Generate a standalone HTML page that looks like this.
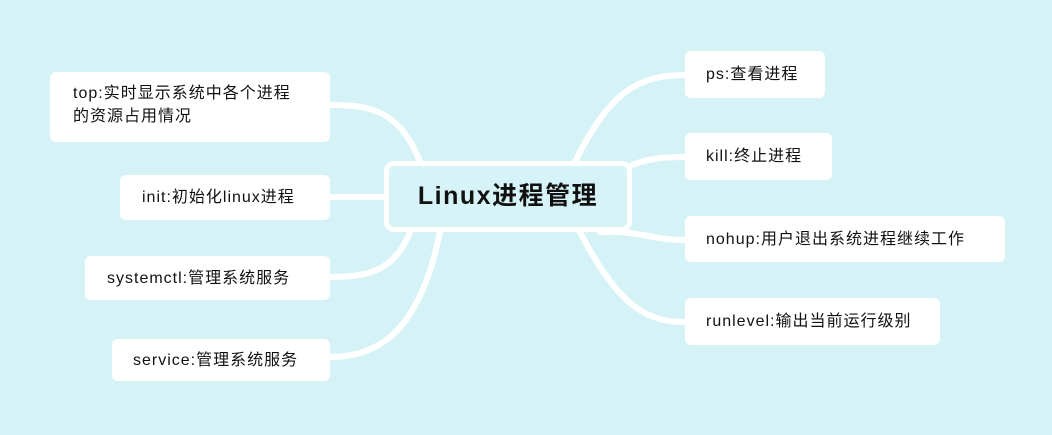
<!DOCTYPE html>
<html><head><meta charset="utf-8"><style>
body{margin:0;width:1052px;height:435px;background:#d5f3f7;position:relative;overflow:hidden;font-family:"Liberation Sans","Noto Sans CJK SC",sans-serif;}
.n{position:absolute;background:#fff;border-radius:6px;font-size:16px;letter-spacing:1px;color:#111;line-height:23px;box-sizing:border-box;white-space:nowrap;}
.c{position:absolute;left:384px;top:161px;width:248px;height:71px;border:5px solid #fff;border-radius:10px;box-sizing:border-box;font-size:25px;letter-spacing:1.5px;font-weight:bold;text-align:center;line-height:61px;color:#111;background:#d6f3f7;}
svg{position:absolute;left:0;top:0}
</style></head><body>
<svg width="1052" height="435"><g fill="none" stroke="#fff" stroke-width="6" stroke-linecap="round">
<path d="M420 162 C400 110 370 105 330 105"/>
<path d="M384 197 C360 197 350 197 330 197"/>
<path d="M410 232 C395 270 370 277 330 277"/>
<path d="M440 232 C420 330 380 357 330 357"/>
<path d="M575 162 C610 90 640 75 685 75"/>
<path d="M632 165 C650 158 665 157 685 157"/>
<path d="M600 232 C640 230 650 240 685 240"/>
<path d="M580 232 C620 310 650 322 685 322"/>
</g></svg>
<div class="c">Linux进程管理</div>
<div class="n" style="left:50px;top:72px;width:280px;height:70px;padding:10px 0 0 23px">top:实时显示系统中各个进程<br>的资源占用情况</div>
<div class="n" style="left:120px;top:175px;width:210px;height:45px;padding:11px 0 0 22px">init:初始化linux进程</div>
<div class="n" style="left:85px;top:256px;width:245px;height:44px;padding:11px 0 0 22px">systemctl:管理系统服务</div>
<div class="n" style="left:112px;top:339px;width:218px;height:42px;padding:10px 0 0 21px">service:管理系统服务</div>
<div class="n" style="left:685px;top:51px;width:140px;height:47px;padding:12px 0 0 21px">ps:查看进程</div>
<div class="n" style="left:685px;top:133px;width:147px;height:47px;padding:12px 0 0 21px">kill:终止进程</div>
<div class="n" style="left:685px;top:216px;width:320px;height:46px;padding:12px 0 0 21px">nohup:用户退出系统进程继续工作</div>
<div class="n" style="left:685px;top:298px;width:255px;height:47px;padding:12px 0 0 21px">runlevel:输出当前运行级别</div>
</body></html>
